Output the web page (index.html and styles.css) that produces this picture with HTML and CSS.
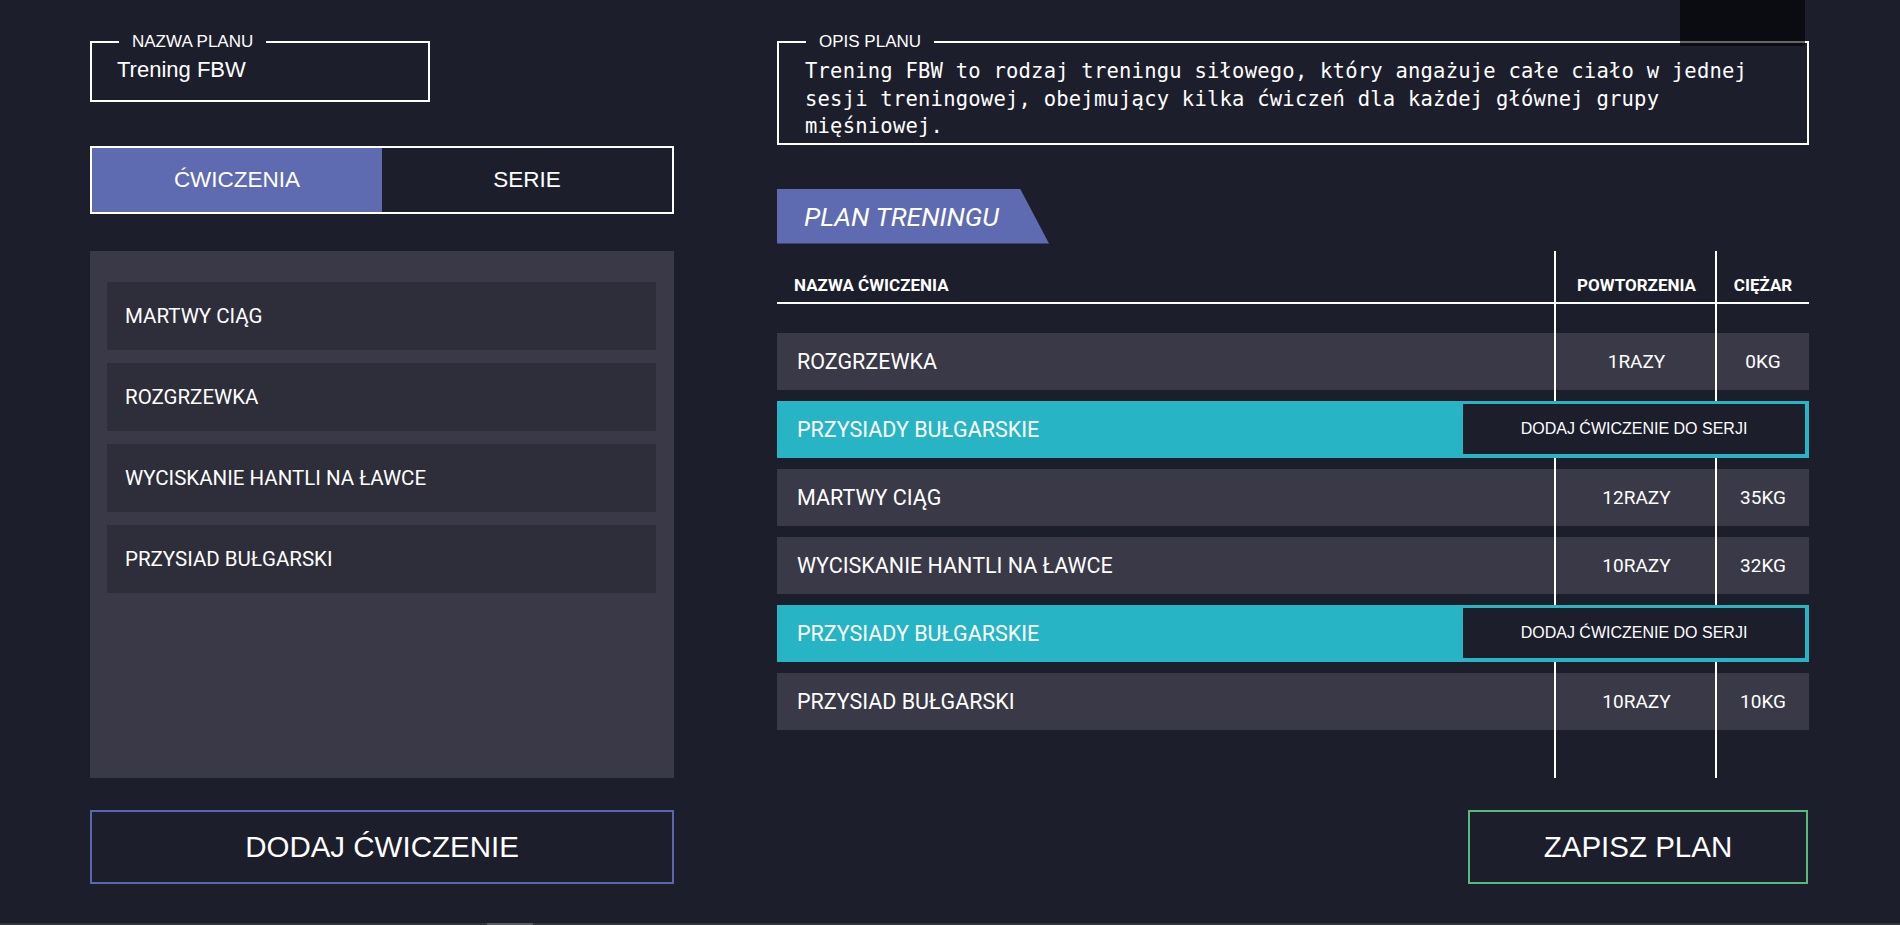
FILE: index.html
```html
<!DOCTYPE html>
<html lang="pl">
<head>
<meta charset="utf-8">
<title>Plan treningowy</title>
<link rel="stylesheet" href="styles.css">
</head>
<body>
<div class="page">
  <div class="corner-shade"></div>
  <div class="layout">
    <section class="col-left">
      <div class="field name-field">
        <span class="field-label">NAZWA PLANU</span>
        <span class="name-value">Trening FBW</span>
      </div>
      <div class="tabs">
        <div class="tab tab-active">ĆWICZENIA</div>
        <div class="tab">SERIE</div>
      </div>
      <div class="exercise-panel">
        <div class="exercise-item">MARTWY CIĄG</div>
        <div class="exercise-item">ROZGRZEWKA</div>
        <div class="exercise-item">WYCISKANIE HANTLI NA ŁAWCE</div>
        <div class="exercise-item">PRZYSIAD BUŁGARSKI</div>
      </div>
      <div class="action-row">
        <button class="btn btn-add">DODAJ ĆWICZENIE</button>
      </div>
    </section>
    <section class="col-right">
      <div class="field desc-field">
        <span class="field-label">OPIS PLANU</span>
        <p class="desc-text">Trening FBW to rodzaj treningu siłowego, który angażuje całe ciało w jednej sesji treningowej, obejmujący kilka ćwiczeń dla każdej głównej grupy mięśniowej.</p>
      </div>
      <div class="plan-tag">PLAN TRENINGU</div>
      <div class="plan-table">
        <div class="vline vline-1"></div>
        <div class="vline vline-2"></div>
        <div class="table-head">
          <div class="th th-name">NAZWA ĆWICZENIA</div>
          <div class="th th-center">POWTORZENIA</div>
          <div class="th th-center">CIĘŻAR</div>
        </div>
        <div class="rows">
          <div class="row">
            <div class="cell-name">ROZGRZEWKA</div>
            <div class="cell-val">1RAZY</div>
            <div class="cell-val">0KG</div>
          </div>
          <div class="row row-selected">
            <div class="cell-name">PRZYSIADY BUŁGARSKIE</div>
            <button class="add-to-set">DODAJ ĆWICZENIE DO SERJI</button>
          </div>
          <div class="row">
            <div class="cell-name">MARTWY CIĄG</div>
            <div class="cell-val">12RAZY</div>
            <div class="cell-val">35KG</div>
          </div>
          <div class="row">
            <div class="cell-name">WYCISKANIE HANTLI NA ŁAWCE</div>
            <div class="cell-val">10RAZY</div>
            <div class="cell-val">32KG</div>
          </div>
          <div class="row row-selected">
            <div class="cell-name">PRZYSIADY BUŁGARSKIE</div>
            <button class="add-to-set">DODAJ ĆWICZENIE DO SERJI</button>
          </div>
          <div class="row">
            <div class="cell-name">PRZYSIAD BUŁGARSKI</div>
            <div class="cell-val">10RAZY</div>
            <div class="cell-val">10KG</div>
          </div>
        </div>
      </div>
      <div class="action-row action-right">
        <button class="btn btn-save">ZAPISZ PLAN</button>
      </div>
    </section>
  </div>
  <div class="hscroll"><div class="hscroll-thumb"></div></div>
</div>
</body>
</html>
```

FILE: styles.css
```css
* { box-sizing: border-box; }

html, body {
  margin: 0;
  padding: 0;
  background: #1d1e2c;
  color: #ffffff;
  font-family: "Liberation Sans", Arial, sans-serif;
}

.page {
  position: relative;
  width: 1900px;
  height: 925px;
  overflow: hidden;
}

.corner-shade {
  position: absolute;
  left: 1680px;
  top: 0;
  width: 125px;
  height: 46px;
  background: rgba(0, 0, 0, 0.6);
  z-index: 5;
}

.layout {
  display: grid;
  grid-template-columns: 584px 1032px;
  column-gap: 103px;
  padding: 41px 91px 0 90px;
}

.col-left, .col-right {
  display: flex;
  flex-direction: column;
}

/* Fieldset-like boxes */
.field {
  position: relative;
  border: 2px solid #ffffff;
}

.field-label {
  position: absolute;
  top: -11px;
  left: 27px;
  padding: 0 13px;
  background: #1d1e2c;
  font-family: "Liberation Sans", Arial, sans-serif;
  font-size: 17px;
  line-height: 20px;
  color: #ffffff;
}

.name-field {
  width: 340px;
  height: 61px;
  display: flex;
  align-items: center;
  padding: 0 0 3px 25px;
}

.name-value {
  font-family: "Liberation Sans", Arial, sans-serif;
  font-size: 22px;
}

/* Tabs */
.tabs {
  margin-top: 44px;
  height: 68px;
  border: 2px solid #ffffff;
  display: grid;
  grid-template-columns: 1fr 1fr;
}

.tab {
  display: flex;
  align-items: center;
  justify-content: center;
  font-family: "Liberation Sans", Arial, sans-serif;
  font-size: 22.5px;
  color: #ffffff;
}

.tab-active {
  background: #5e6bb0;
}

/* Exercise list panel */
.exercise-panel {
  margin-top: 37px;
  height: 527px;
  background: #3a3947;
  padding: 31px 18px 0 17px;
  display: flex;
  flex-direction: column;
  gap: 13px;
}

.exercise-item {
  height: 68px;
  background: #2e2d3a;
  display: flex;
  align-items: center;
  padding-left: 18px;
  font-family: Roboto, "Liberation Sans", sans-serif;
  font-size: 20.5px;
  color: #ffffff;
}

/* Buttons */
.action-row {
  margin-top: 32px;
  display: flex;
}

.action-right {
  justify-content: flex-end;
  padding-right: 1px;
}

.btn {
  height: 74px;
  background: #1d1e2c;
  color: #ffffff;
  font-family: "Liberation Sans", Arial, sans-serif;
  font-size: 29.5px;
  padding: 0;
  cursor: pointer;
}

.btn-add {
  width: 584px;
  border: 2px solid #5a67ae;
}

.btn-save {
  width: 340px;
  border: 2px solid #5cb87a;
}

/* Description */
.desc-field {
  padding: 15px 20px 2px 26px;
}

.desc-text {
  margin: 0;
  font-family: "DejaVu Sans Mono", "Liberation Mono", monospace;
  font-size: 20.5px;
  letter-spacing: 0.22px;
  line-height: 27.5px;
  color: #ffffff;
}

/* Plan tag */
.plan-tag {
  margin-top: 44px;
  width: 272px;
  height: 55px;
  background: #5e6bb0;
  clip-path: polygon(0 0, 243px 0, 272px 100%, 0 100%);
  display: flex;
  align-items: center;
  padding-left: 27px;
  font-family: Roboto, "Liberation Sans", sans-serif;
  font-style: italic;
  font-size: 26.5px;
  color: #ffffff;
}

/* Plan table */
.plan-table {
  position: relative;
  margin-top: 7px;
  height: 527px;
}

.vline {
  position: absolute;
  top: 0;
  bottom: 0;
  width: 2px;
  background: #ffffff;
  z-index: 1;
}

.vline-1 { left: 777px; }
.vline-2 { left: 938px; }

.table-head {
  display: grid;
  grid-template-columns: 779px 161px 1fr;
  height: 53px;
  border-bottom: 2px solid #ffffff;
  padding-top: 24px;
}

.th {
  font-family: Roboto, "Liberation Sans", sans-serif;
  font-weight: 700;
  font-size: 17px;
  line-height: 20px;
  color: #ffffff;
}

.th-name { padding-left: 17px; }
.th-center { text-align: center; }

.rows {
  margin-top: 29px;
  display: flex;
  flex-direction: column;
  gap: 11px;
}

.row {
  height: 57px;
  background: #3a3947;
  display: grid;
  grid-template-columns: 779px 161px 1fr;
  align-items: center;
}

.cell-name {
  padding-left: 20px;
  font-family: Roboto, "Liberation Sans", sans-serif;
  font-size: 21.5px;
  color: #ffffff;
}

.cell-val {
  text-align: center;
  font-family: Roboto, "Liberation Sans", sans-serif;
  font-size: 19px;
  color: #ffffff;
}

.row-selected {
  position: relative;
  z-index: 2;
  background: #27b5c5;
  display: flex;
  align-items: center;
  justify-content: space-between;
}

.add-to-set {
  width: 342px;
  height: 50px;
  margin-right: 4px;
  border: none;
  background: #1d1e2c;
  color: #ffffff;
  font-family: "Liberation Sans", Arial, sans-serif;
  font-size: 16px;
  padding: 0;
}

/* Bottom scrollbar strip */
.hscroll {
  position: absolute;
  left: 0;
  right: 0;
  bottom: 0;
  height: 2px;
  background: #33333d;
}

.hscroll-thumb {
  margin-left: 487px;
  width: 46px;
  height: 2px;
  background: #5a5a64;
}
```
